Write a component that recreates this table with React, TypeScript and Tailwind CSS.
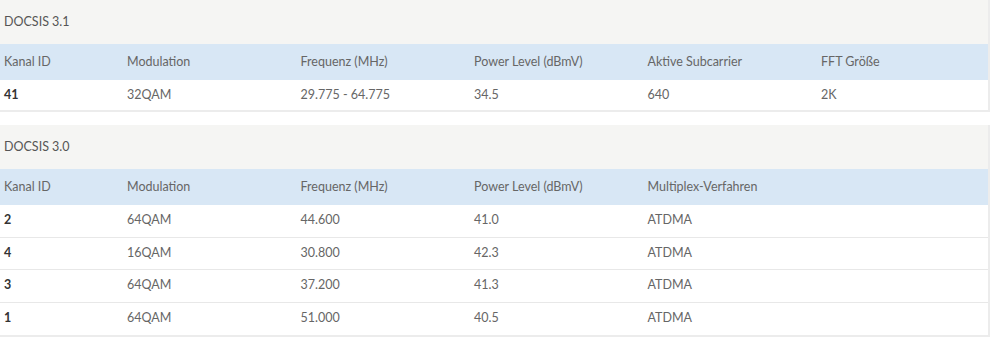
import React from 'react';

type Panel = {
  title: string;
  headers: string[];
  rows: string[][];
  rowClass: string;
};

const panels: Panel[] = [
  {
    title: 'DOCSIS 3.1',
    headers: ['Kanal ID', 'Modulation', 'Frequenz (MHz)', 'Power Level (dBmV)', 'Aktive Subcarrier', 'FFT Größe'],
    rows: [['41', '32QAM', '29.775 - 64.775', '34.5', '640', '2K']],
    rowClass: 'h-[30px]',
  },
  {
    title: 'DOCSIS 3.0',
    headers: ['Kanal ID', 'Modulation', 'Frequenz (MHz)', 'Power Level (dBmV)', 'Multiplex-Verfahren'],
    rows: [
      ['2', '64QAM', '44.600', '41.0', 'ATDMA'],
      ['4', '16QAM', '30.800', '42.3', 'ATDMA'],
      ['3', '64QAM', '37.200', '41.3', 'ATDMA'],
      ['1', '64QAM', '51.000', '40.5', 'ATDMA'],
    ],
    rowClass: 'h-[32.5px]',
  },
];

const cols = 'grid grid-cols-[123px_173.5px_173.5px_173.5px_173.5px_1fr]';

const ChannelTable = ({ panel }: { panel: Panel }) => {
  return (
    <section className="w-[990px] border-r-2 border-b-2 border-[#ececec] bg-white">
      <div className="h-[44px] flex items-center px-1 bg-[#f5f5f3] text-[#555] text-[12.5px]">{panel.title}</div>
      <div className={`${cols} h-[36px] items-center bg-[#d8e7f5] text-[#666] text-[12.5px]`}>
        {panel.headers.map((h) => (
          <div key={h} className="px-1 whitespace-nowrap">{h}</div>
        ))}
      </div>
      {panel.rows.map((row, i) => (
        <div
          key={i}
          className={`${cols} ${panel.rowClass} items-center text-[12.5px] ${i < panel.rows.length - 1 ? 'border-b border-[#e8e8e8]' : ''}`}
        >
          {row.map((cell, j) => (
            <div key={j} className={`px-1 whitespace-nowrap ${j === 0 ? 'font-bold text-[#333]' : 'text-[#666]'}`}>
              {cell}
            </div>
          ))}
        </div>
      ))}
    </section>
  );
};

export default function App() {
  return (
    <div className="w-[999px] h-[348px] bg-white flex flex-col gap-[13px] font-['Lato','Liberation_Sans',sans-serif]">
      {panels.map((p) => (
        <ChannelTable key={p.title} panel={p} />
      ))}
    </div>
  );
}
